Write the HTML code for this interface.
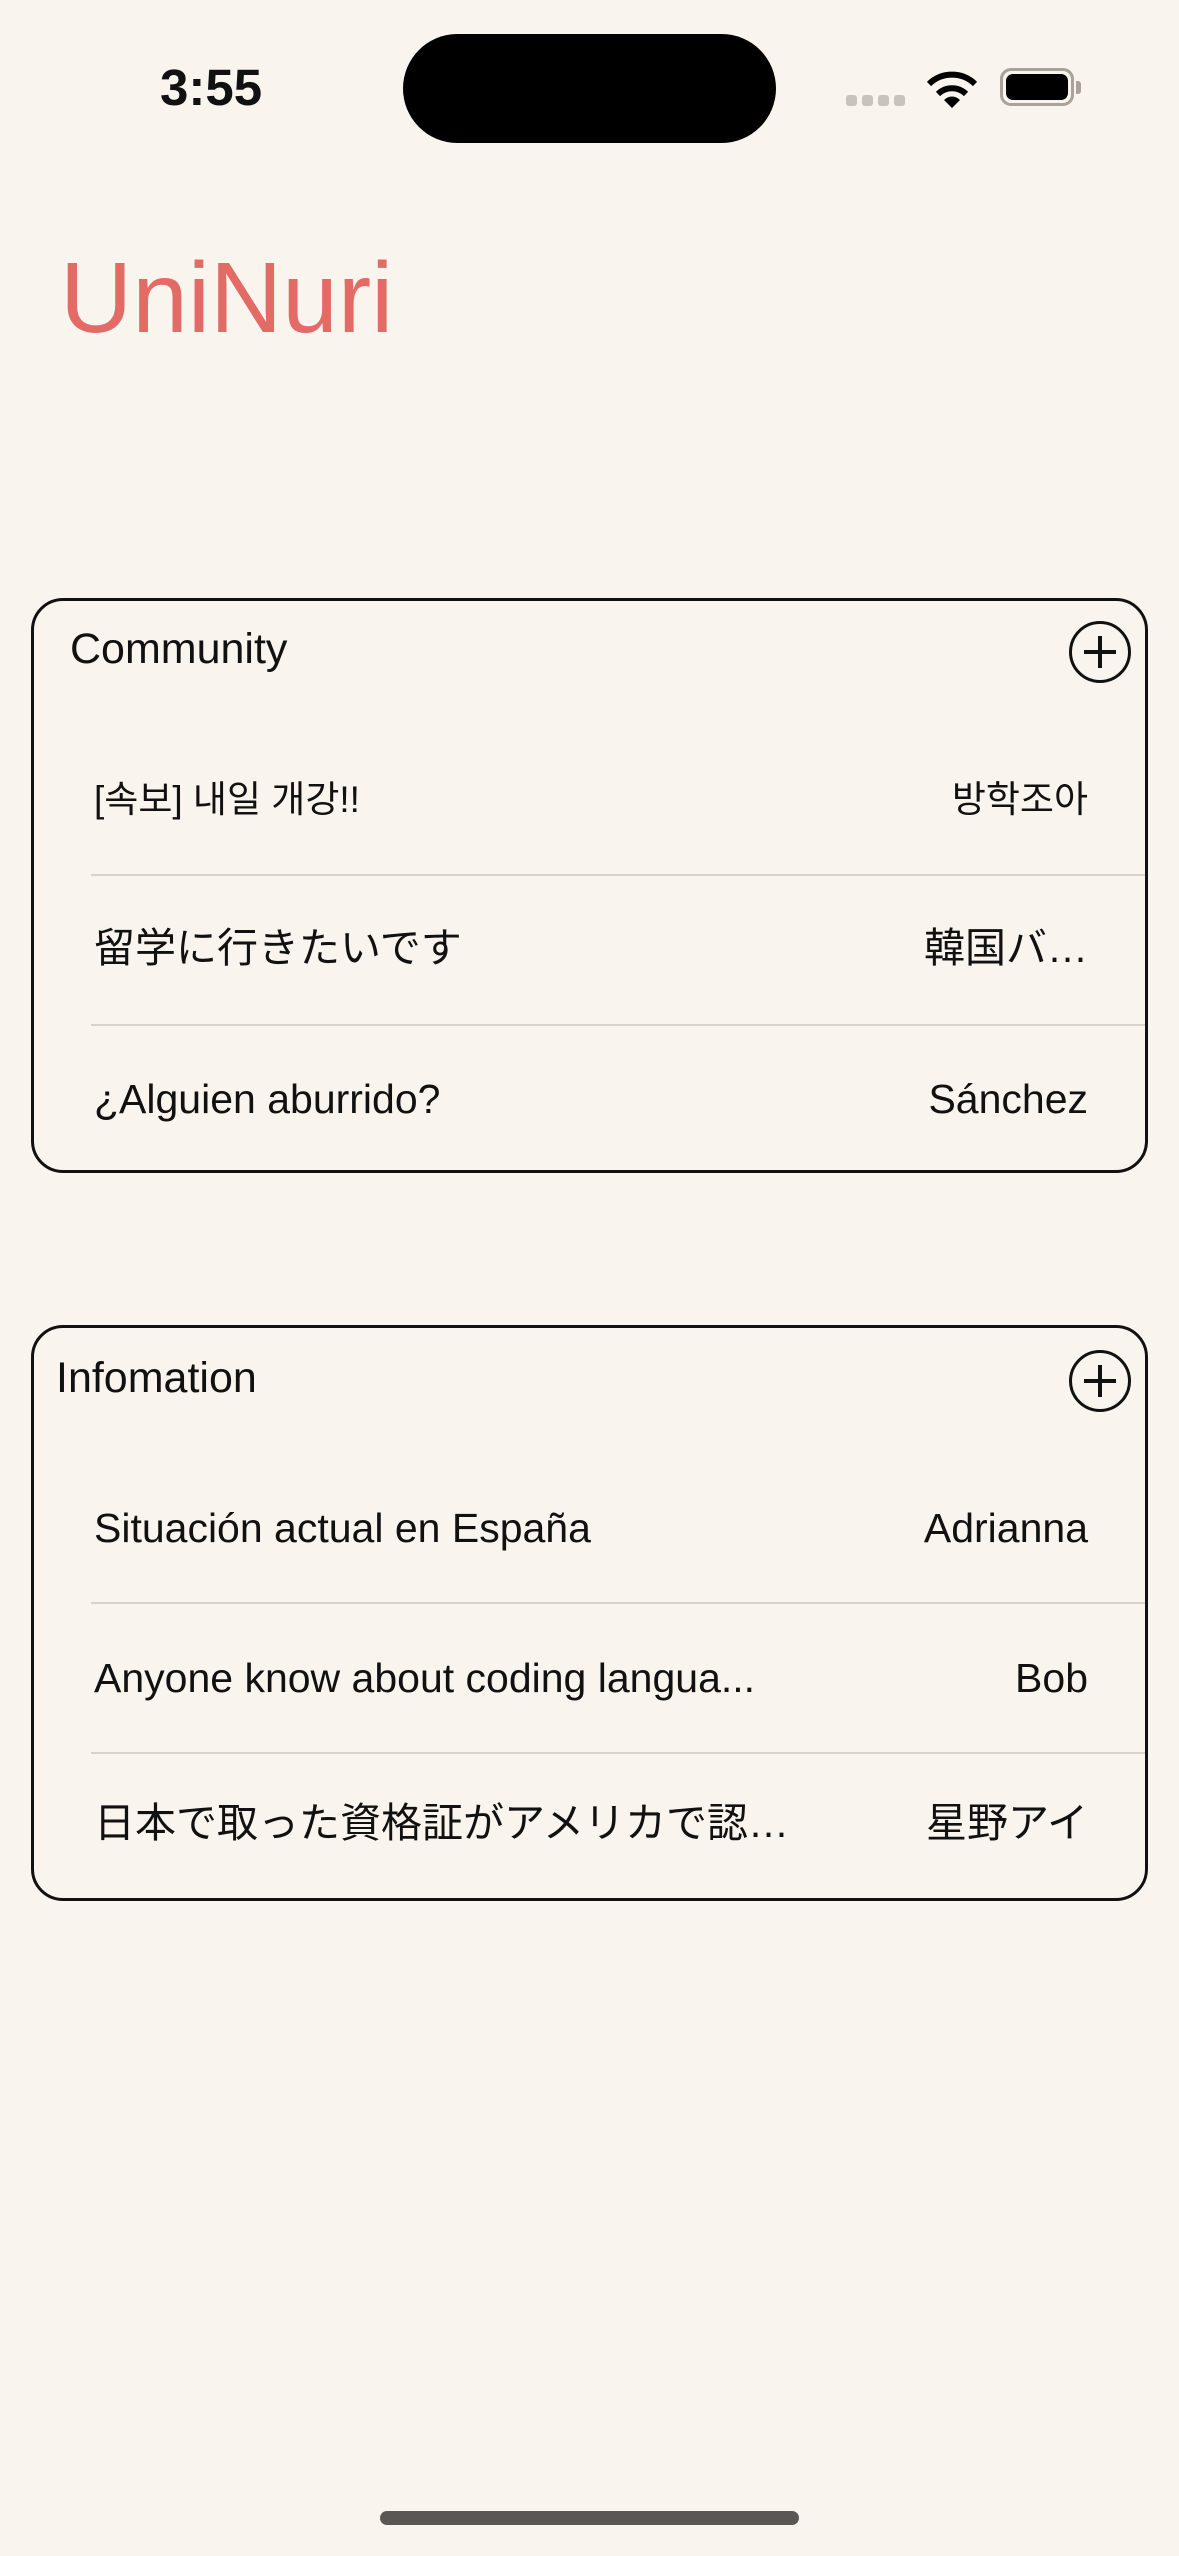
<!DOCTYPE html>
<html><head><meta charset="utf-8"><style>
html,body{margin:0;padding:0}
body{width:1179px;height:2556px;background:#FAF4EE;position:relative;overflow:hidden;font-family:"Liberation Sans","Noto Sans CJK JP","Noto Sans CJK KR",sans-serif;color:#111}
.abs{position:absolute}
.card{position:absolute;left:31px;width:1117px;border:3px solid #111;border-radius:32px;box-sizing:border-box}
.hd{position:absolute;font-size:43px;line-height:50px}
.plus{position:absolute;right:14px;width:62px;height:62px;border:3.5px solid #111;border-radius:50%;box-sizing:border-box}
.plus:before,.plus:after{content:"";position:absolute;background:#111;left:50%;top:50%;transform:translate(-50%,-50%)}
.plus:before{width:32px;height:4px}.plus:after{width:4px;height:32px}
.row{position:absolute;left:60px;right:57px;font-size:41px;line-height:50px;display:flex;justify-content:space-between;white-space:nowrap}
.sep{position:absolute;left:57px;right:0;height:2px;background:#d6d2cc}
</style></head><body>
<div class="abs" style="left:160px;top:58px;font-size:51px;font-weight:bold;line-height:60px">3:55</div>
<div class="abs" style="left:403px;top:34px;width:373px;height:109px;background:#000;border-radius:55px"></div>
<div class="abs" style="left:846px;top:95px;width:11px;height:11px;border-radius:3px;background:#c8c3bd"></div>
<div class="abs" style="left:862px;top:95px;width:11px;height:11px;border-radius:3px;background:#c8c3bd"></div>
<div class="abs" style="left:878px;top:95px;width:11px;height:11px;border-radius:3px;background:#c8c3bd"></div>
<div class="abs" style="left:894px;top:95px;width:11px;height:11px;border-radius:3px;background:#c8c3bd"></div>
<svg class="abs" style="left:926px;top:68px" width="52" height="40" viewBox="0 0 52 40">
<path d="M26 40 L18 32 A11 11 0 0 1 34 32 Z" fill="#000"/>
<path d="M12 26 A20 20 0 0 1 40 26" stroke="#000" stroke-width="6" fill="none"/>
<path d="M3 16 A33 33 0 0 1 49 16" stroke="#000" stroke-width="6" fill="none"/>
</svg>
<div class="abs" style="left:1000px;top:68px;width:74px;height:38px;border:3px solid #a8a29b;border-radius:11px;box-sizing:border-box"></div>
<div class="abs" style="left:1006px;top:74px;width:62px;height:26px;background:#000;border-radius:7px"></div>
<div class="abs" style="left:1076px;top:81px;width:5px;height:13px;background:#a8a29b;border-radius:0 3px 3px 0"></div>
<div class="abs" style="left:60px;top:240px;font-size:100px;line-height:116px;color:#E26B66">UniNuri</div>

<div class="card" style="top:598px;height:575px">
<div class="hd" style="left:36px;top:23px">Community</div>
<div class="plus" style="top:20px"></div>
<div class="row" style="top:174px;font-size:37px"><span>[속보] 내일 개강!!</span><span>방학조아</span></div>
<div class="sep" style="top:273px"></div>
<div class="row" style="top:322px"><span>留学に行きたいです</span><span>韓国バ…</span></div>
<div class="sep" style="top:423px"></div>
<div class="row" style="top:473px"><span>¿Alguien aburrido?</span><span>Sánchez</span></div>
</div>

<div class="card" style="top:1325px;height:576px">
<div class="hd" style="left:22px;top:25px">Infomation</div>
<div class="plus" style="top:22px"></div>
<div class="row" style="top:175px"><span>Situación actual en España</span><span>Adrianna</span></div>
<div class="sep" style="top:274px"></div>
<div class="row" style="top:325px"><span>Anyone know about coding langua...</span><span>Bob</span></div>
<div class="sep" style="top:424px"></div>
<div class="row" style="top:470px"><span>日本で取った資格証がアメリカで認…</span><span>星野アイ</span></div>
</div>

<div class="abs" style="left:380px;top:2511px;width:419px;height:14px;border-radius:7px;background:#5a5654"></div>
</body></html>
